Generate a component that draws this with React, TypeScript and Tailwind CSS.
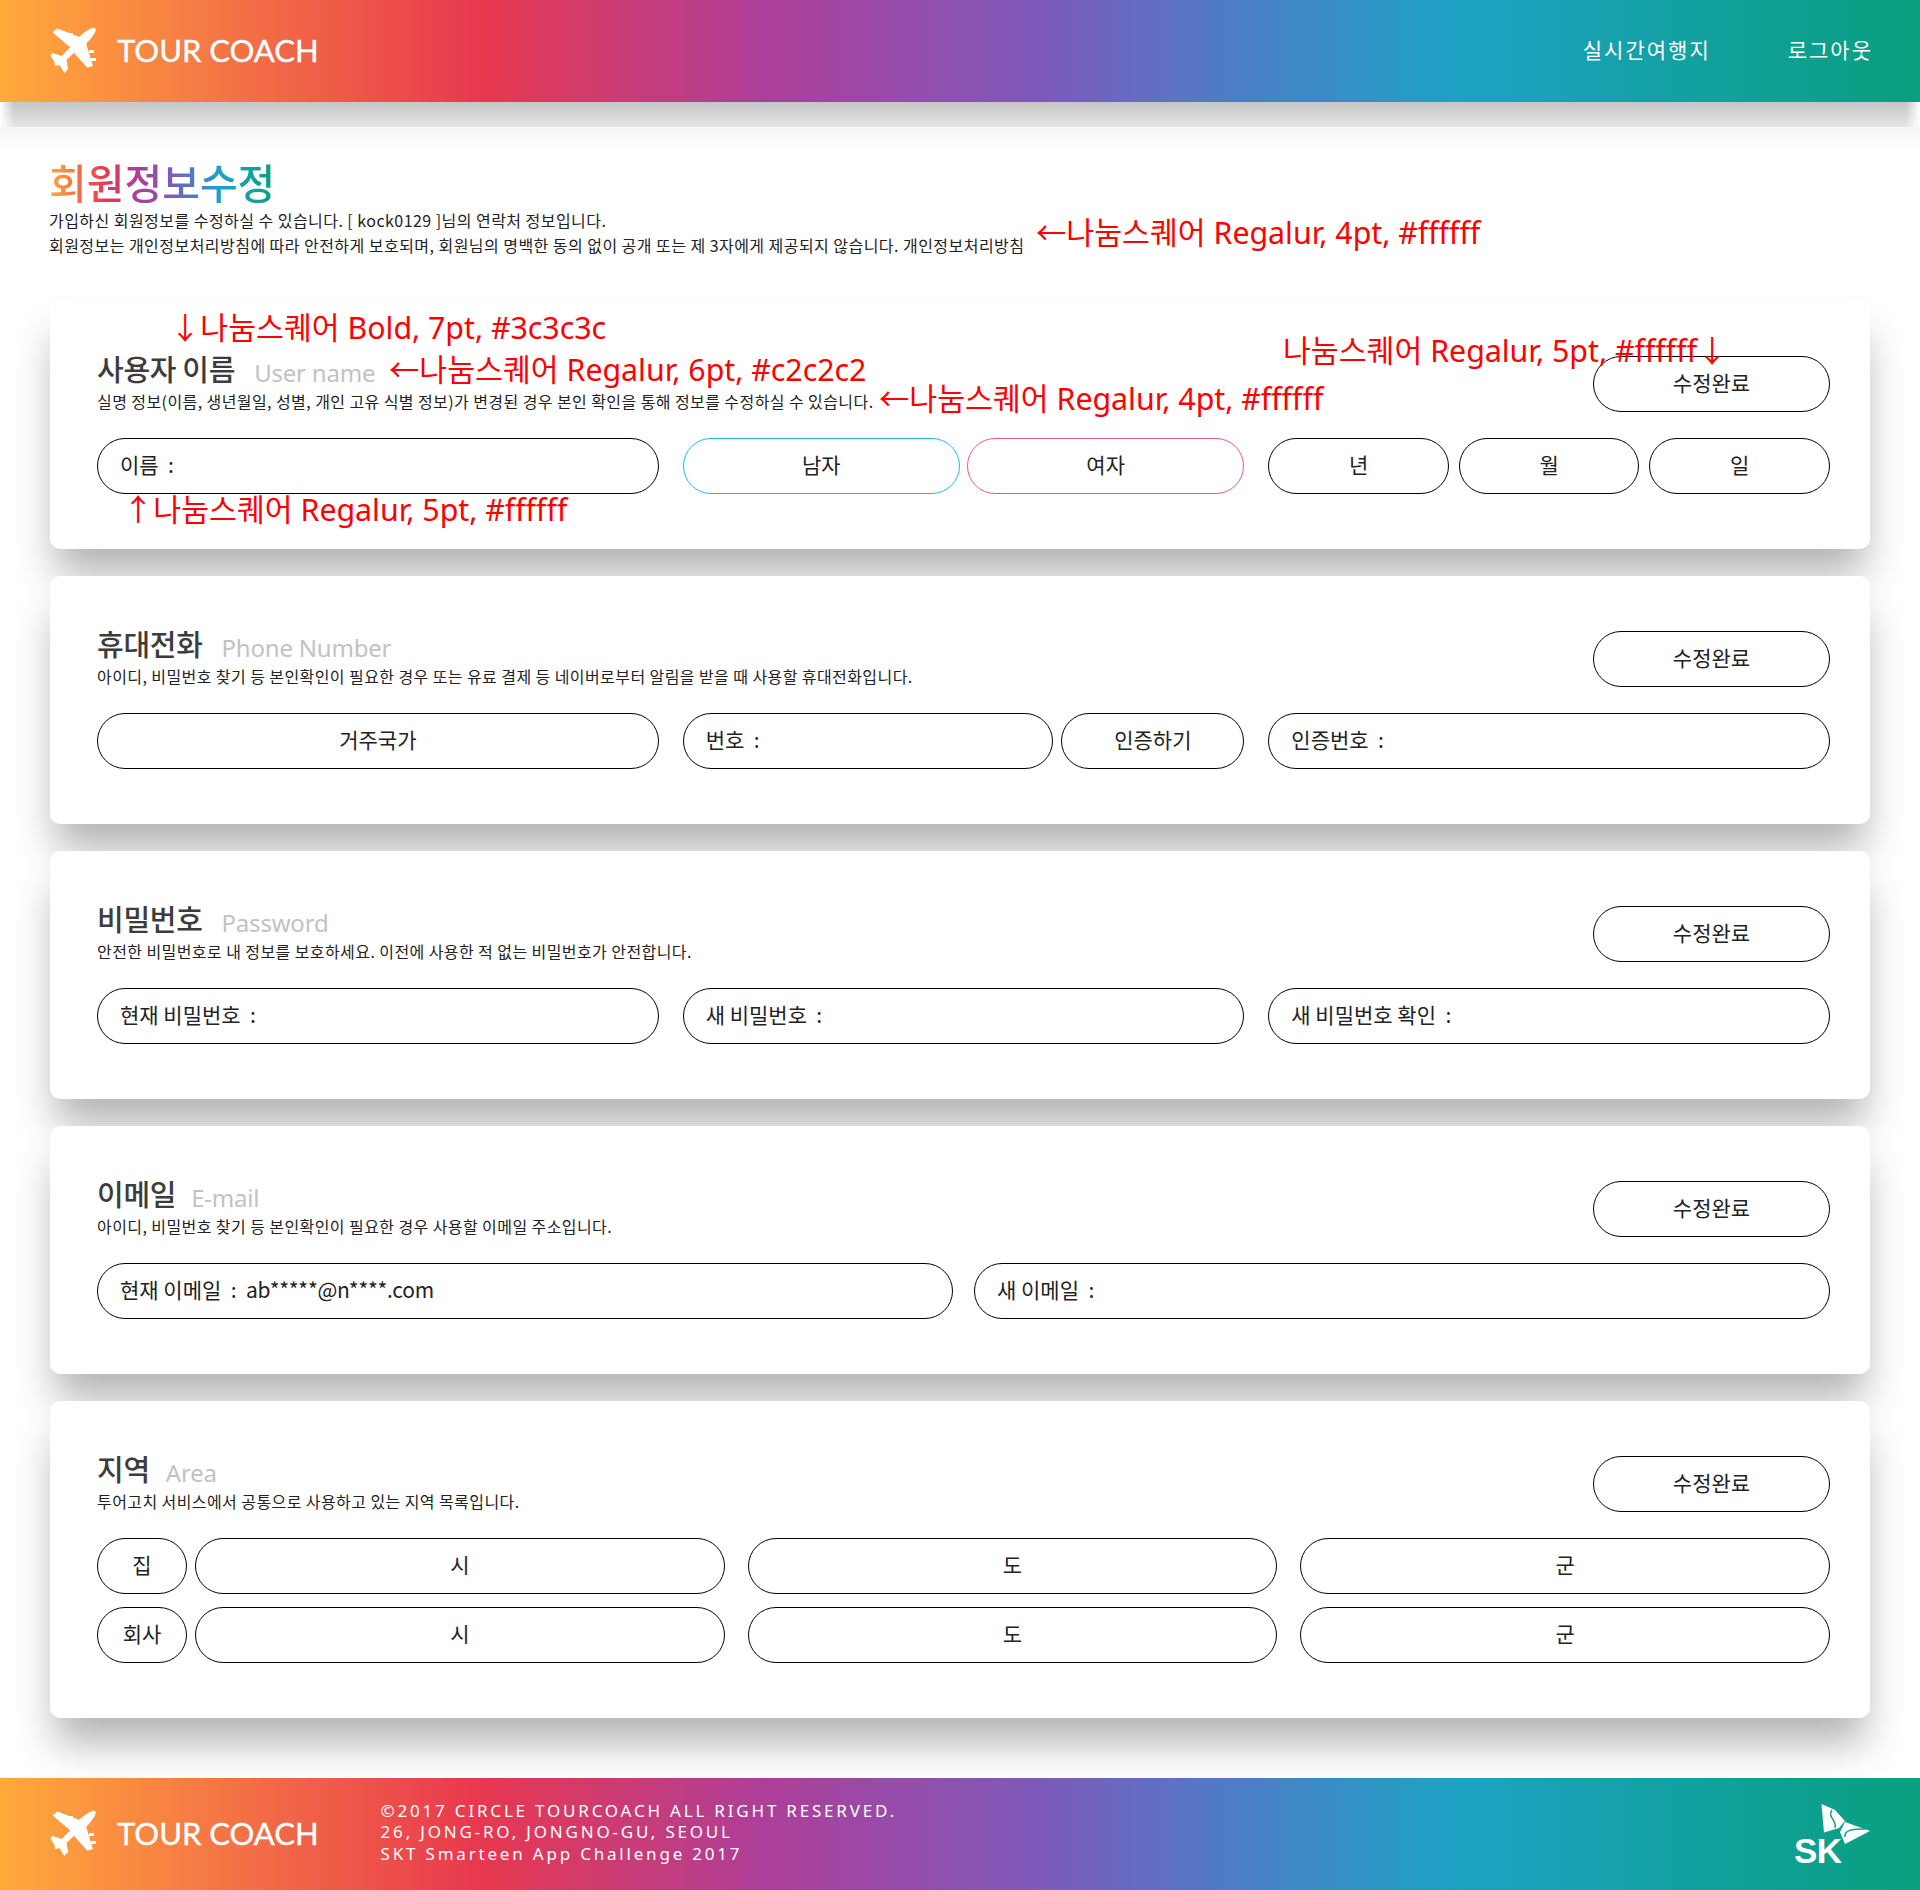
// @ts-nocheck
const KR = "font-['Noto_Sans_CJK_KR','Noto_Sans',sans-serif]";

function PlaneLogo() {
  return (
    <svg width="50" height="48" viewBox="0 0 50 48" className="shrink-0 -ml-[1px]">
      <path
        d="M46 1.5C47.5 3 44 9 36.7 17L43.3 38.7L38.3 40.3L25 25.3L17 33L18.5 42L15.5 45.5L10.5 37.5L6.5 38.5L6 35L2 29L3.3 26.3L12.5 29.5L21.7 20.3L4 5.3L8.3 2L30 10.3C37 4 44 0 46 1.5Z"
        fill="#fff"
        stroke="#fff"
        strokeLinejoin="round"
      />
      <rect x="13" y="4" width="3" height="5" fill="#fff" />
      <rect x="21" y="6" width="3" height="5" fill="#fff" />
      <rect x="40" y="23" width="5" height="3" fill="#fff" />
      <rect x="42" y="31" width="5" height="3" fill="#fff" />
    </svg>
  );
}

function Brand() {
  return (
    <div className="flex items-center gap-[18px]">
      <PlaneLogo />
      <span className="font-['Lato',sans-serif] text-[31px] leading-none text-white [-webkit-text-stroke:0.4px_#fff] -translate-y-[1px]">
        TOUR COACH
      </span>
    </div>
  );
}

function SkLogo() {
  return (
    <div className="relative w-[76px] h-[61px]">
      <svg width="76" height="61" viewBox="0 0 76 61" className="absolute right-0 top-0">
        <path d="M27.5 0L41 6L51 17L45 24L30 28.5Z" fill="#fff" />
        <path d="M51 18L76 27L51 40L46 28Z" fill="#fff" />
        <path d="M38 6C33 13 43 16 41 24" fill="none" stroke="#0f9f8c" strokeWidth="1.5" />
        <path d="M51 33C50 26 58 25 71 25" fill="none" stroke="#0f9f8c" strokeWidth="1.5" />
      </svg>
      <span className="absolute left-0 bottom-[-7px] font-['Liberation_Sans',sans-serif] font-bold text-[35px] leading-[1.15] tracking-[-0.5px] text-white">
        SK
      </span>
    </div>
  );
}

function Pill({ children, className = "border-black", center = false }) {
  return (
    <div
      className={`h-[56px] pb-[2px] rounded-full border bg-white flex items-center text-[21px] text-[#222] ${KR} ${
        center ? "justify-center" : "pl-[22px]"
      } ${className}`}
    >
      {children}
    </div>
  );
}

function Section({ title, sub, desc, children, gap = "gap-[19px]" }) {
  return (
    <section className="rounded-[10px] bg-white pt-[55px] pb-[55px] pl-[47px] pr-[40px] shadow-[0_30px_40px_-5px_rgba(0,0,0,0.3)]">
      <div className="flex justify-between h-[82px]">
        <div className="-mt-[6px]">
          <div className={`flex items-end ${gap} h-[36px]`}>
            <h2 className={`text-[29px] leading-[36px] font-medium text-[#3c3c3c] tracking-[-0.3px] ${KR}`}>
              {title}
            </h2>
            <span className="font-['Noto_Sans',sans-serif] text-[24px] leading-[36px] text-[#c2c2c2] translate-y-[5px] tracking-[-0.2px]">
              {sub}
            </span>
          </div>
          <p className={`mt-[4px] text-[16px] leading-[22px] text-[#222] tracking-[0.42px] ${KR}`}>{desc}</p>
        </div>
        <div className="w-[237px]">
          <Pill center>수정완료</Pill>
        </div>
      </div>
      {children}
    </section>
  );
}

const redText = `absolute text-[30.3px] leading-[40px] text-[#ff0000] whitespace-nowrap ${"font-['Noto_Sans','Noto_Sans_CJK_KR',sans-serif]"}`;

export default function App() {
  return (
    <div className="relative w-[1920px] h-[1890px] bg-white overflow-hidden">
      {/* HEADER */}
      <header className="relative z-10 h-[102px] flex items-center justify-between pl-[50px] pr-[47px] bg-[linear-gradient(90deg,#ffaa3b_0%,#e8384f_25%,#ac3f9a_40%,#7a5cbc_55%,#4f7cc6_64%,#1ca2c4_76%,#0a9f7e_100%)]">
        <Brand />
        <nav className={`flex gap-[77px] text-[21px] tracking-[2px] text-white -translate-y-[1px] ${KR}`}>
          <span>실시간여행지</span>
          <span>로그아웃</span>
        </nav>
        {/* drop shadow strip under the bar */}
        <div className="absolute left-0 right-0 top-full">
          <div className="h-[25px] bg-[linear-gradient(180deg,#c6c6c6,#e4e4e4)] [mask-image:linear-gradient(90deg,transparent,#000_14px,#000_calc(100%-14px),transparent)]" />
          <div className="h-[23px] bg-[linear-gradient(180deg,#f6f6f6,#ffffff)]" />
        </div>
      </header>

      <main className="px-[50px]">
        <div className="h-[199px] pt-[53px]">
          <h1
            className={`w-fit -ml-[1px] text-[41px] leading-[53px] font-medium bg-[linear-gradient(90deg,#ffaa3b_0%,#e8384f_25%,#ac3f9a_40%,#7a5cbc_55%,#4f7cc6_64%,#1ca2c4_76%,#0a9f7e_100%)] bg-clip-text text-transparent ${KR}`}
          >
            회원정보수정
          </h1>
          <div className={`-ml-[1px] text-[16px] leading-[25px] text-[#222] tracking-[0.46px] ${KR}`}>
            <p>가입하신 회원정보를 수정하실 수 있습니다. [ kock0129 ]님의 연락처 정보입니다.</p>
            <p>
              회원정보는 개인정보처리방침에 따라 안전하게 보호되며, 회원님의 명백한 동의 없이 공개 또는 제 3자에게
              제공되지 않습니다. 개인정보처리방침
            </p>
          </div>
        </div>

        <div className="flex flex-col gap-[27px]">
          <Section
            title="사용자 이름"
            sub="User name"
            desc="실명 정보(이름, 생년월일, 성별, 개인 고유 식별 정보)가 변경된 경우 본인 확인을 통해 정보를 수정하실 수 있습니다."
          >
            <div className="grid grid-cols-3 gap-x-[24px]">
              <Pill>이름 &nbsp;:</Pill>
              <div className="flex gap-[7px]">
                <div className="flex-1">
                  <Pill center className="border-[#22b8e6]">남자</Pill>
                </div>
                <div className="flex-1">
                  <Pill center className="border-[#f0558c]">여자</Pill>
                </div>
              </div>
              <div className="grid grid-cols-3 gap-[10px]">
                <Pill center>년</Pill>
                <Pill center>월</Pill>
                <Pill center>일</Pill>
              </div>
            </div>
          </Section>

          <Section
            title="휴대전화"
            sub="Phone Number"
            desc="아이디, 비밀번호 찾기 등 본인확인이 필요한 경우 또는 유료 결제 등 네이버로부터 알림을 받을 때 사용할 휴대전화입니다."
          >
            <div className="grid grid-cols-3 gap-x-[24px]">
              <Pill center>거주국가</Pill>
              <div className="flex gap-[8px]">
                <div className="flex-1">
                  <Pill>번호 &nbsp;:</Pill>
                </div>
                <div className="w-[183px]">
                  <Pill center>인증하기</Pill>
                </div>
              </div>
              <Pill>인증번호 &nbsp;:</Pill>
            </div>
          </Section>

          <Section
            title="비밀번호"
            sub="Password"
            desc="안전한 비밀번호로 내 정보를 보호하세요. 이전에 사용한 적 없는 비밀번호가 안전합니다."
          >
            <div className="grid grid-cols-3 gap-x-[24px]">
              <Pill>현재 비밀번호 &nbsp;:</Pill>
              <Pill>새 비밀번호 &nbsp;:</Pill>
              <Pill>새 비밀번호 확인 &nbsp;:</Pill>
            </div>
          </Section>

          <Section
            title="이메일"
            sub="E-mail"
            gap="gap-[15px]"
            desc="아이디, 비밀번호 찾기 등 본인확인이 필요한 경우 사용할 이메일 주소입니다."
          >
            <div className="grid grid-cols-2 gap-x-[21px]">
              <Pill>
                현재 이메일 &nbsp;:&nbsp;&nbsp;<span className="tracking-[-0.25px]">ab*****@n****.com</span>
              </Pill>
              <Pill>새 이메일 &nbsp;:</Pill>
            </div>
          </Section>

          <Section
            title="지역"
            sub="Area"
            gap="gap-[16px]"
            desc="투어고치 서비스에서 공통으로 사용하고 있는 지역 목록입니다."
          >
            <div className="flex flex-col gap-[13px]">
              {["집", "회사"].map((place) => (
                <div key={place} className="flex gap-[8px]">
                  <div className="w-[90px]">
                    <Pill center>{place}</Pill>
                  </div>
                  <div className="flex-1 grid grid-cols-3 gap-x-[23px]">
                    <Pill center>시</Pill>
                    <Pill center>도</Pill>
                    <Pill center>군</Pill>
                  </div>
                </div>
              ))}
            </div>
          </Section>
        </div>
      </main>

      {/* FOOTER */}
      <footer className="absolute bottom-0 left-0 right-0 h-[112px] flex items-center pl-[50px] pr-[50px] bg-[linear-gradient(90deg,#ffaa3b_0%,#e8384f_25%,#ac3f9a_40%,#7a5cbc_55%,#4f7cc6_64%,#1ca2c4_76%,#0a9f7e_100%)]">
        <Brand />
        <div className="ml-[62px] -translate-y-[2px] font-['Noto_Sans',sans-serif] text-[17px] leading-[21.5px] tracking-[2.8px] text-white">
          <p>©2017 CIRCLE TOURCOACH ALL RIGHT RESERVED.</p>
          <p>26, JONG-RO, JONGNO-GU, SEOUL</p>
          <p>SKT Smarteen App Challenge 2017</p>
        </div>
        <div className="ml-auto">
          <SkLogo />
        </div>
      </footer>

      {/* Spec annotations over the design */}
      <span className={`${redText} left-[1036px] top-[213px]`}>←나눔스퀘어 Regalur, 4pt, #ffffff</span>
      <span className={`${redText} left-[170px] top-[308px]`}>↓나눔스퀘어 Bold, 7pt, #3c3c3c</span>
      <span className={`${redText} left-[389px] top-[350px]`}>←나눔스퀘어 Regalur, 6pt, #c2c2c2</span>
      <span className={`${redText} left-[879px] top-[379px]`}>←나눔스퀘어 Regalur, 4pt, #ffffff</span>
      <span className={`${redText} left-[1283px] top-[331px]`}>나눔스퀘어 Regalur, 5pt, #ffffff↓</span>
      <span className={`${redText} left-[123px] top-[490px]`}>↑나눔스퀘어 Regalur, 5pt, #ffffff</span>
    </div>
  );
}
